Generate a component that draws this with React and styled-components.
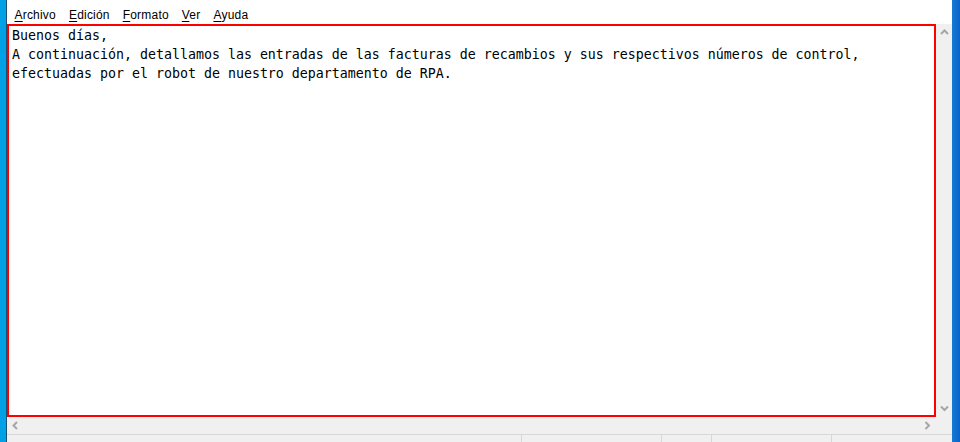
import React from "react";
import styled, { createGlobalStyle } from "styled-components";

const GlobalStyle = createGlobalStyle`
	html, body {
		margin: 0;
		padding: 0;
		width: 960px;
		height: 442px;
		overflow: hidden;
		background: #0a6fcf;
	}
	* {
		box-sizing: border-box;
	}
`;

const Desktop = styled.div`
	display: flex;
	width: 960px;
	height: 442px;
	overflow: hidden;
`;

const LeftEdge = styled.div`
	width: 7px;
	flex-shrink: 0;
	background: #02a1e6;
	border-right: 1px solid #1d4f72;
`;

const RightEdge = styled.div`
	width: 8px;
	flex-shrink: 0;
	background: linear-gradient(90deg, #1479d6 0%, #0b63c6 100%);
`;

const Window = styled.div`
	flex: 1;
	display: flex;
	flex-direction: column;
	background: #ffffff;
	min-width: 0;
`;

const MenuBar = styled.div`
	height: 24px;
	flex-shrink: 0;
	display: flex;
	align-items: flex-start;
	padding: 6px 0 0 1px;
	background: #ffffff;
	font-family: "Segoe UI", "Liberation Sans", Arial, sans-serif;
	font-size: 12px;
	line-height: 18px;
	letter-spacing: 0.2px;
	color: #000;
`;

const MenuItem = styled.span`
	padding: 0 6.5px;
`;

const Key = styled.span`
	text-decoration: underline;
	text-underline-offset: 2px;
`;

const Body = styled.div`
	display: flex;
	height: 393px;
	flex-shrink: 0;
`;

const Editor = styled.div`
	flex: 1;
	border: 2px solid #ff0000;
	padding: 0 0 0 3px;
	background: #ffffff;
	font-family: "DejaVu Sans Mono", "Liberation Mono", monospace;
	font-size: 13.29px;
	line-height: 19px;
	color: #000;
	white-space: pre;
	overflow: hidden;
`;

const VScroll = styled.div`
	width: 16px;
	flex-shrink: 0;
	display: flex;
	flex-direction: column;
	justify-content: space-between;
	background: #f0f0f0;
`;

const HScrollRow = styled.div`
	display: flex;
	height: 17px;
	flex-shrink: 0;
	border-bottom: 1px solid #d7d7d7;
	box-sizing: content-box;
`;

const HScroll = styled.div`
	flex: 1;
	display: flex;
	justify-content: space-between;
	background: #f0f0f0;
`;

const Corner = styled.div`
	width: 16px;
	flex-shrink: 0;
	background: #f0f0f0;
`;

const ArrowBox = styled.div`
	width: ${(p) => (p.$horizontal ? "17px" : "16px")};
	height: 17px;
	display: flex;
	align-items: center;
	justify-content: center;
`;

const StatusBar = styled.div`
	display: flex;
	height: 22px;
	flex-shrink: 0;
	background: #f0f0f0;
`;

const StatusCell = styled.div`
	width: ${(p) => p.$w || "auto"};
	flex: ${(p) => (p.$w ? "0 0 auto" : "1")};
	border-left: ${(p) => (p.$first ? "none" : "1px solid #d7d7d7")};
`;

const Chevron = ({ dir }) => {
	const paths = {
		up: "M1 5 L4.5 1.5 L8 5",
		down: "M1 1.5 L4.5 5 L8 1.5",
		left: "M5 1 L1.5 4.5 L5 8",
		right: "M1.5 1 L5 4.5 L1.5 8",
	};
	const vertical = dir === "up" || dir === "down";
	return (
		<svg
			width={vertical ? 9 : 7}
			height={vertical ? 7 : 9}
			viewBox={vertical ? "0 0 9 7" : "0 0 7 9"}
		>
			<path d={paths[dir]} fill="none" stroke="#a6a6a6" strokeWidth="2" />
		</svg>
	);
};

const menus = [
	["A", "rchivo"],
	["E", "dición"],
	["F", "ormato"],
	["V", "er"],
	["A", "yuda"],
];

const text = `Buenos días,
A continuación, detallamos las entradas de las facturas de recambios y sus respectivos números de control,
efectuadas por el robot de nuestro departamento de RPA.`;

const App = () => {
	return (
		<>
			<GlobalStyle />
			<Desktop>
				<LeftEdge />
				<Window>
					<MenuBar>
						{menus.map(([k, rest], i) => (
							<MenuItem key={i}>
								<Key>{k}</Key>
								{rest}
							</MenuItem>
						))}
					</MenuBar>
					<Body>
						<Editor>{text}</Editor>
						<VScroll>
							<ArrowBox>
								<Chevron dir="up" />
							</ArrowBox>
							<ArrowBox>
								<Chevron dir="down" />
							</ArrowBox>
						</VScroll>
					</Body>
					<HScrollRow>
						<HScroll>
							<ArrowBox $horizontal>
								<Chevron dir="left" />
							</ArrowBox>
							<ArrowBox $horizontal>
								<Chevron dir="right" />
							</ArrowBox>
						</HScroll>
						<Corner />
					</HScrollRow>
					<StatusBar>
						<StatusCell $first $w="514px" />
						<StatusCell $w="140px" />
						<StatusCell $w="50px" />
						<StatusCell $w="120px" />
						<StatusCell />
					</StatusBar>
				</Window>
				<RightEdge />
			</Desktop>
		</>
	);
};

export default App;
